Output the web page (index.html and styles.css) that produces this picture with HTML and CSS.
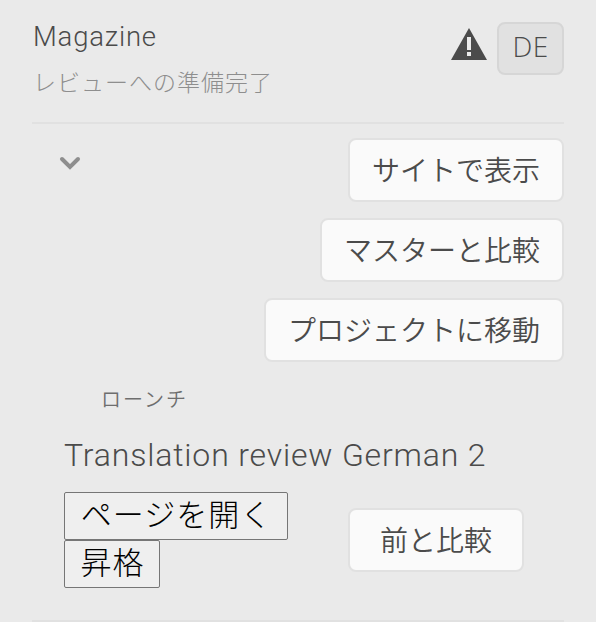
FILE: index.html
```html
<!DOCTYPE html>
<html lang="ja">
<head>
<meta charset="utf-8">
<title>Magazine</title>
<link rel="stylesheet" href="styles.css">
</head>
<body>
<main class="panel">
  <header class="header">
    <div class="heading">
      <h1 class="title">Magazine</h1>
      <p class="status">レビューへの準備完了</p>
    </div>
    <div class="badges">
      <svg class="alert" viewBox="0 0 36 32" width="36" height="32"><path d="M18 0 36 32H0Z" fill="#4b4b4b"/><path d="M16 9h4v13h-4zM16 24h4v4h-4z" fill="#eaeaea"/></svg>
      <span class="lang">DE</span>
    </div>
  </header>
  <section class="actions">
    <svg class="chevron" viewBox="0 0 22 14" width="22" height="14"><path d="m3 3 8 8 8-8" fill="none" stroke="#8e8e8e" stroke-width="4" stroke-linecap="round"/></svg>
    <div class="buttons">
      <button class="btn">サイトで表示</button>
      <button class="btn">マスターと比較</button>
      <button class="btn">プロジェクトに移動</button>
    </div>
  </section>
  <section class="launch">
    <h2 class="label">ローンチ</h2>
    <p class="name">Translation review German 2</p>
    <div class="row">
      <div class="natives">
        <button class="native open">ページを開く</button>
        <button class="native promote">昇格</button>
      </div>
      <button class="btn compare">前と比較</button>
    </div>
  </section>
</main>
</body>
</html>
```
FILE: styles.css
```css
* { box-sizing: border-box; }
body {
  margin: 0;
  background: #eaeaea;
  color: #4b4b4b;
  font-family: "Noto Sans CJK JP", sans-serif;
}
h1, h2, p { margin: 0; font-weight: 300; white-space: nowrap; }
button { padding: 0; font-family: "Noto Sans CJK JP", sans-serif; white-space: nowrap; }
.panel { height: 622px; padding: 0 32px; overflow: hidden; }
.header { display: flex; justify-content: space-between; height: 124px; border-bottom: 2px solid #e1e1e1; }
.heading { padding: 19px 0 0 1px; }
.title { font: 300 27.5px/36px Roboto, sans-serif; letter-spacing: 0.8px; }
.status { margin-top: 8px; font: 300 23px/36px "Noto Sans CJK JP", sans-serif; letter-spacing: 1px; color: #8e8e8e; }
.badges { display: flex; align-items: flex-start; gap: 10px; padding-top: 22px; }
.alert { margin-top: 6px; }
.lang { width: 67px; height: 53px; border: 2px solid #d6d6d6; border-radius: 8px; background: #e1e1e1; font: 300 28px/44px "Open Sans", sans-serif; letter-spacing: 0.5px; text-align: center; }
.actions { display: flex; justify-content: space-between; padding: 14px 0 0 27px; }
.chevron { margin-top: 18px; }
.buttons { display: flex; flex-direction: column; align-items: flex-end; gap: 16px; }
.btn { height: 64px; padding: 0 22px 2px; border: 2px solid #e1e1e1; border-radius: 8px; background: #fafafa; color: #4b4b4b; font-size: 28px; font-weight: 350; line-height: 58px; }
.launch { height: 260px; border-bottom: 2px solid #e1e1e1; padding: 21px 0 0 32px; }
.label { padding-left: 37px; font: 350 20px/32px "Noto Sans CJK JP", sans-serif; letter-spacing: 2px; color: #6e6e6e; }
.name { margin-top: 20px; font: 300 32px/40px Roboto, sans-serif; letter-spacing: 0.83px; }
.row { display: flex; justify-content: space-between; margin-top: 17px; padding-right: 40px; }
.natives { display: flex; flex-direction: column; align-items: flex-start; }
.native { height: 48px; padding: 0 0 6px 1px; border: 1px solid #767676; border-radius: 2px; background: #efefef; color: #000; font-size: 31px; letter-spacing: 1px; font-weight: 300; line-height: 40px; }
.open { width: 224px; }
.promote { width: 96px; }
.compare { width: 176px; margin-top: 16px; }
```
